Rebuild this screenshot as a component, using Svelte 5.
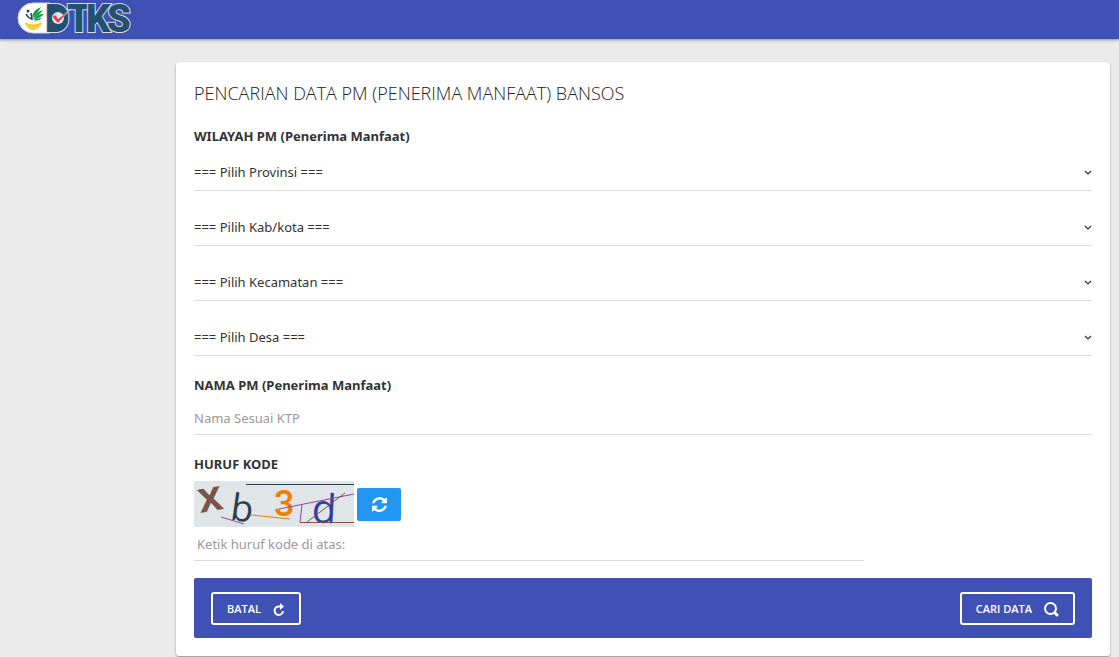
<script lang="ts">
	type Region = { id: string; label: string };

	const regions: Region[] = [
		{ id: 'provinsi', label: 'Provinsi' },
		{ id: 'kabupaten', label: 'Kab/kota' },
		{ id: 'kecamatan', label: 'Kecamatan' },
		{ id: 'desa', label: 'Desa' }
	];

	let selected: Record<string, string> = $state({
		provinsi: '',
		kabupaten: '',
		kecamatan: '',
		desa: ''
	});
	let name = $state('');
	let code = $state('');

	function reset() {
		for (const region of regions) selected[region.id] = '';
		name = '';
		code = '';
	}
</script>

<header class="topbar">
	<a class="brand" href="/" aria-label="DTKS">
		<svg width="114" height="32" viewBox="0 0 114 32">
			<path d="M15 1H32V31H15A15 15 0 0 1 15 1Z" fill="#fff" stroke="#cfd6e8" />
			<text class="wordmark" x="27 49 68 89" y="30">DTKS</text>
			<rect x="34" y="7" width="10" height="19" fill="#24506f" />
			<circle cx="40" cy="16" r="6" fill="#dfe5ec" />
			<path d="M34 14L38 13L40 17L53 7L40 21Q37 19 34 14Z" fill="#e8374d" stroke="#dfe5ec" stroke-width="0.5" />
			<g fill="#159b48">
				<path d="M14 15Q15 8 23 5Q20 11 14 15Z" />
				<path d="M14 16Q18 10 25 8Q21 14 14 16Z" />
				<path d="M15 17Q19 12 26 12Q22 17 15 17Z" />
				<path d="M15 18Q20 16 24 16Q20 20 15 18Z" />
			</g>
			<circle cx="10" cy="9" r="1.5" fill="#243c83" />
			<path d="M8 12Q10 16 14 17L13 11" fill="none" stroke="#243c83" stroke-width="1.5" />
			<path d="M7 20Q15 25 24 20Q22 28 15 28Q9 28 7 20Z" fill="#fbc51b" />
			<path d="M9 23L12 27M13 24L15 27M18 24L17 27M22 23L19 27" stroke="#fff3b8" stroke-width="0.7" />
		</svg>
	</a>
</header>

<main class="card">
	<h1>PENCARIAN DATA PM (PENERIMA MANFAAT) BANSOS</h1>

	<form onsubmit={(e) => e.preventDefault()}>
		<fieldset>
			<legend>WILAYAH PM (Penerima Manfaat)</legend>
			{#each regions as region}
				<div class="select">
					<select class="control" id={region.id} aria-label={region.label} bind:value={selected[region.id]}>
						<option value="">=== Pilih {region.label} ===</option>
					</select>
					<svg width="8" height="6" viewBox="0 0 8 6">
						<path d="M1 1L4 4L7 1" fill="none" stroke="currentColor" stroke-width="1.2" />
					</svg>
				</div>
			{/each}
		</fieldset>

		<div class="field">
			<label for="name">NAMA PM (Penerima Manfaat)</label>
			<input class="control name" id="name" type="text" placeholder="Nama Sesuai KTP" bind:value={name} />
		</div>

		<div class="field">
			<label for="code">HURUF KODE</label>
			<div class="captcha">
				<svg width="160" height="46" viewBox="0 0 160 46">
					<rect width="160" height="46" fill="#e0e6e8" />
					<g class="glyphs">
						<text class="heavy" x="4" y="30" fill="#795548" transform="rotate(-10 16 18)">x</text>
						<text x="37" y="40" fill="#2c3e50" transform="rotate(8 47 27)">b</text>
						<text class="medium" x="80" y="35" fill="#f57c00">3</text>
						<text class="large" x="118" y="42" fill="#303f9f" transform="rotate(3 130 28)">d</text>
					</g>
					<g fill="none" stroke-width="1">
						<path d="M52 3.5H160" stroke="#263e4e" />
						<path d="M85 28L160 13M27 36L50 43M108 24L106 41" stroke="#8e44ad" />
						<path d="M57 34L96 38" stroke="#f57c00" />
						<path d="M106 41.5H160M113 41L151 12" stroke="#795548" />
					</g>
				</svg>
				<button class="refresh" type="button" aria-label="Muat ulang kode">
					<svg width="15" height="15" viewBox="0 0 1536 1536">
						<path
							fill="currentColor"
							d="M1511 928q0 5-1 7-64 268-268 434.500T764 1536q-146 0-282.500-55T238 1324l-129 129q-19 19-45 19t-45-19-19-45V960q0-26 19-45t45-19h448q26 0 45 19t19 45-19 45l-137 137q71 66 161 102t187 36q134 0 250-65t186-179q11-17 53-117 8-23 30-23h192q13 0 22.500 9.500t9.500 22.500zM1536 128v448q0 26-19 45t-45 19h-448q-26 0-45-19t-19-45 19-45l138-138Q969 256 768 256q-134 0-250 65T332 500q-11 17-53 117-8 23-30 23H50q-13 0-22.500-9.500T18 608v-7q65-268 270-434.500T768 0q146 0 284 55.500T1297 212l130-129q19-19 45-19t45 19 19 45z"
						/>
					</svg>
				</button>
			</div>
			<input class="control code" id="code" type="text" placeholder="Ketik huruf kode di atas:" bind:value={code} />
		</div>

		<div class="actions">
			<button type="button" onclick={reset}>
				BATAL
				<svg width="12" height="14" viewBox="0 0 12 14">
					<path d="M8 4.500H6A4.200 4.200 0 1 0 10 9" fill="none" stroke="currentColor" stroke-width="2" />
					<path d="M7 1L11 4.500L7 8Z" fill="currentColor" />
				</svg>
			</button>
			<button type="submit">
				CARI DATA
				<svg width="15" height="16" viewBox="1 0 15 16" fill="none" stroke="currentColor">
					<circle cx="7.500" cy="7.500" r="5.500" stroke-width="2" />
					<path d="M12 12L14 14" stroke-width="3" stroke-linecap="round" />
				</svg>
			</button>
		</div>
	</form>
</main>

<style>
	:global(body) {
		background: #ebebeb;
		color: #333;
		font-family: 'Noto Sans', sans-serif;
		font-size: 13px;
	}

	.topbar {
		display: flex;
		align-items: center;
		height: 39px;
		padding: 0 18px;
		box-sizing: border-box;
		background: #3f51b5;
		box-shadow: 0 1px 3px rgba(0, 0, 0, 0.4);
	}

	.brand {
		display: flex;
		margin-bottom: 3px;
	}

	.brand svg,
	.captcha svg {
		overflow: visible;
	}

	.wordmark {
		font: 900 38px Roboto, sans-serif;
		fill: #24506f;
		stroke: #d5dde8;
		stroke-width: 2;
		paint-order: stroke;
	}

	.card {
		margin: 23px 9px 1px 176px;
		padding: 18px;
		background: #fff;
		border-radius: 3px;
		box-shadow: 0 1px 2px rgba(0, 0, 0, 0.4);
	}

	h1 {
		margin: 0 0 20px;
		color: #222;
		font-family: 'Open Sans', sans-serif;
		font-size: 18px;
		font-weight: 300;
		line-height: 26px;
	}

	fieldset {
		display: grid;
		gap: 18px;
		min-width: 0;
		margin: 0;
		padding: 0;
		border: 0;
	}

	legend,
	label {
		display: block;
		padding: 0;
		font-weight: 700;
		line-height: 20px;
	}

	legend {
		margin-bottom: 8px;
	}

	.select {
		display: grid;
		align-items: center;
	}

	.select > * {
		grid-area: 1 / 1;
	}

	.select svg {
		justify-self: end;
		pointer-events: none;
	}

	.control {
		display: block;
		width: 100%;
		height: 37px;
		padding: 0;
		box-sizing: border-box;
		appearance: none;
		border: 0;
		border-bottom: 1px solid #ddd;
		border-radius: 0;
		outline: 0;
		background: transparent;
		color: #333;
		font: inherit;
	}

	input::placeholder {
		color: #999;
		opacity: 1;
	}

	.field {
		margin-top: 19px;
	}

	.name {
		height: 33px;
		margin-top: 7px;
	}

	.captcha {
		display: flex;
		align-items: center;
		gap: 3px;
		margin-top: 7px;
	}

	.glyphs {
		font: 37px 'Open Sans', sans-serif;
	}

	.heavy {
		font: 700 44px 'Liberation Sans', sans-serif;
	}

	.medium {
		font: 500 36px Roboto, sans-serif;
	}

	.large {
		font-size: 40px;
	}

	.refresh {
		display: flex;
		align-items: center;
		justify-content: center;
		width: 44px;
		height: 33px;
		padding: 0;
		border: 0;
		border-radius: 2px;
		background: #2196f3;
		color: #fff;
	}

	.code {
		width: calc(75% - 4px);
		height: 34px;
		padding-left: 3px;
	}

	.actions {
		display: flex;
		justify-content: space-between;
		margin-top: 17px;
		padding: 14px 17px 13px;
		border-radius: 2px;
		background: #3f51b5;
	}

	.actions button {
		display: flex;
		align-items: center;
		gap: 12px;
		height: 33px;
		padding: 0 14px;
		border: 2px solid #fff;
		border-radius: 3px;
		background: transparent;
		color: #fff;
		font: 600 11px 'Open Sans', sans-serif;
	}
</style>
